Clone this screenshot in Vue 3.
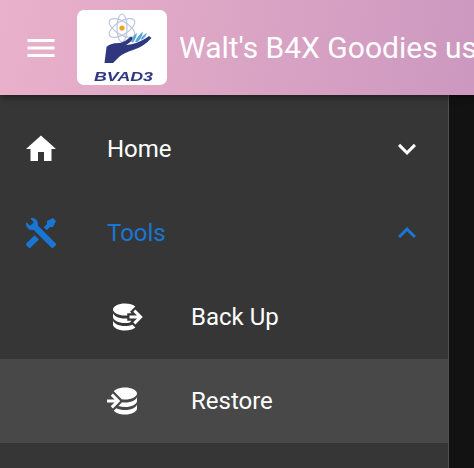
<template>
  <div class="app-shell">
    <header class="app-bar">
      <button class="menu-btn" aria-label="Menu">
        <svg class="icon" viewBox="0 0 24 24"><path :d="icons.menu" /></svg>
      </button>
      <div class="logo">
        <svg viewBox="0 0 90 75" width="90" height="75">
          <g fill="none" stroke="#bcc6dc" stroke-width="1.2">
            <ellipse cx="45" cy="18" rx="14.5" ry="6.5" transform="rotate(32 45 18)" />
            <ellipse cx="45" cy="18" rx="14.5" ry="6.5" transform="rotate(-32 45 18)" />
            <ellipse cx="45" cy="18" rx="5" ry="14" />
          </g>
          <circle cx="45" cy="18" r="2.6" fill="#f0a324" />
          <path d="M27.500 53 L29.500 37 C33 33.500 38 33 43 33 C47 32 50 30 54 26.500 L56 28 C55 31 52 33 49 35 C55 35 66 31 72 26 L74.500 28 C70 33 63 38 56 40 C50 42 45 44 42 47 L36 53 Z" fill="#2f387f" />
          <path d="M54 32 C55 28 57 25 60 23 C59.500 27 58 30 56 32.500 Z M58 32 C60 27 63 24 66 21.500 C65.500 26 63.500 29.500 60.500 32 Z M63.500 29.500 C65 26.500 67.500 24 70 23 C69 26 67.500 28 65.500 29.500 Z" fill="#5aa5d8" />
          <text x="17" y="71" class="logo-text" textLength="59" lengthAdjust="spacingAndGlyphs">BVAD3</text>
        </svg>
      </div>
      <h1 class="title">Walt's B4X Goodies us</h1>
    </header>

    <div class="content">
      <nav class="drawer">
        <div class="nav-item">
          <svg class="icon nav-icon" viewBox="0 0 24 24"><path :d="icons.home" /></svg>
          <span class="nav-label">Home</span>
          <svg class="icon chevron" viewBox="0 0 24 24"><path :d="icons.chevronDown" /></svg>
        </div>
        <div class="nav-item active">
          <svg class="icon nav-icon" viewBox="0 0 24 24"><path :d="icons.tools" /></svg>
          <span class="nav-label">Tools</span>
          <svg class="icon chevron" viewBox="0 0 24 24"><path :d="icons.chevronUp" /></svg>
        </div>
        <div
          v-for="item in subItems"
          :key="item.label"
          :class="['nav-item', 'sub-item', { hovered: item.hovered }]"
        >
          <svg class="icon nav-icon" viewBox="0 0 24 24"><path :d="item.icon" /></svg>
          <span class="nav-label">{{ item.label }}</span>
        </div>
      </nav>
    </div>
  </div>
</template>

<script setup>
const icons = {
  menu: 'M3,6H21V8H3V6M3,11H21V13H3V11M3,16H21V18H3V16Z',
  home: 'M10,20V14H14V20H19V12H22L12,3L2,12H5V20H10Z',
  tools: 'M21.71 20.29L20.29 21.71A1 1 0 0 1 18.88 21.71L7 9.85A3.81 3.81 0 0 1 6 10A4 4 0 0 1 2.22 4.7L4.76 7.24L5.29 6.71L6.71 5.29L7.24 4.76L4.7 2.22A4 4 0 0 1 10 6A3.81 3.81 0 0 1 9.85 7L21.71 18.88A1 1 0 0 1 21.71 20.29M2.29 18.88A1 1 0 0 0 2.29 20.29L3.71 21.71A1 1 0 0 0 5.12 21.71L10.59 16.25L7.76 13.42L2.29 18.88M20 2L16 4V6L13.83 8.17L15.83 10.17L18 8H20L22 4L20 2Z',
  chevronDown: 'M7.41,8.58L12,13.17L16.59,8.58L18,10L12,16L6,10L7.41,8.58Z',
  chevronUp: 'M7.41,15.41L12,10.83L16.59,15.41L18,14L12,8L6,14L7.41,15.41Z'
}

const subItems = [
  {
    label: 'Back Up',
    icon: 'M12,3C7.58,3 4,4.79 4,7C4,9.21 7.58,11 12,11C12.5,11 13,10.97 13.5,10.92V9.5H16.39L15.39,8.5L18.9,5C17.5,3.8 14.94,3 12,3M18.92,7.08L17.5,8.5L20,11H15V13H20L17.5,15.5L18.92,16.92L23.84,12M4,9V12C4,14.21 7.58,16 12,16C13.17,16 14.26,15.85 15.25,15.63L16.38,14.5H13.5V12.92C13,12.97 12.5,13 12,13C7.58,13 4,11.21 4,9M4,14V17C4,19.21 7.58,21 12,21C14.94,21 17.5,20.2 18.9,19L17,17.1C15.63,17.67 13.9,18 12,18C7.58,18 4,16.21 4,14Z'
  },
  {
    label: 'Restore',
    hovered: true,
    icon: 'M12,3C8.59,3 5.69,4.07 4.54,5.57L9.79,10.82C10.5,10.93 11.22,11 12,11C16.42,11 20,9.21 20,7C20,4.79 16.42,3 12,3M3.92,7.08L2.5,8.5L5,11H0V13H5L2.5,15.5L3.92,16.92L8.84,12M20,9C20,11.21 16.42,13 12,13C11.34,13 10.7,12.95 10.09,12.87L7.62,15.34C8.88,15.75 10.38,16 12,16C16.42,16 20,14.21 20,12M20,14C20,16.21 16.42,18 12,18C9.72,18 7.67,17.5 6.21,16.75L4.53,18.43C5.68,19.93 8.59,21 12,21C16.42,21 20,19.21 20,17'
  }
]
</script>

<style scoped>
.app-shell {
  display: flex;
  flex-direction: column;
  width: 474px;
  height: 468px;
  overflow: hidden;
  background: #121212;
  font-family: Roboto, "Liberation Sans", sans-serif;
}

.app-bar {
  position: relative;
  z-index: 1;
  display: flex;
  align-items: center;
  flex: 0 0 95px;
  height: 95px;
  padding-left: 23px;
  background: linear-gradient(100deg, #e9b1ca 0%, #cc98bf 100%);
  box-shadow: 0 2px 4px -1px rgba(0, 0, 0, .2), 0 4px 5px rgba(0, 0, 0, .14), 0 1px 10px rgba(0, 0, 0, .12);
}

.menu-btn {
  width: 36px;
  height: 36px;
  padding: 0;
  margin-right: 18px;
  border: 0;
  background: none;
  flex: none;
}

.logo {
  flex: none;
  width: 90px;
  height: 75px;
  margin-right: 12px;
  border-radius: 7px;
  background: #fff;
  overflow: hidden;
}

.logo svg {
  display: block;
  filter: blur(.35px);
}

.logo-text {
  font-family: "Liberation Sans", sans-serif;
  font-size: 12px;
  font-style: italic;
  font-weight: 700;
  fill: #2f387f;
}

.title {
  margin: 0;
  font-size: 30px;
  font-weight: 400;
  line-height: 1;
  color: #fff;
  white-space: nowrap;
}

.icon {
  display: block;
  width: 36px;
  height: 36px;
  fill: #fff;
  flex: none;
}

.content {
  flex: 1;
  min-height: 0;
}

.drawer {
  box-sizing: border-box;
  width: 449px;
  height: 100%;
  padding-top: 12px;
  background: #363636;
  border-right: 1px solid #505050;
}

.nav-item {
  display: flex;
  align-items: center;
  height: 84px;
  padding: 0 23px;
  color: #fff;
}

.sub-item {
  padding-left: 107px;
}

.nav-icon {
  margin-right: 48px;
}

.nav-label {
  flex: 1;
  font-size: 24px;
  line-height: 1;
}

.active {
  color: #1976d2;
}

.active .icon {
  fill: #1976d2;
}

.hovered {
  background: #484848;
}
</style>

<style>
html,
body {
  background: #121212;
}
</style>
